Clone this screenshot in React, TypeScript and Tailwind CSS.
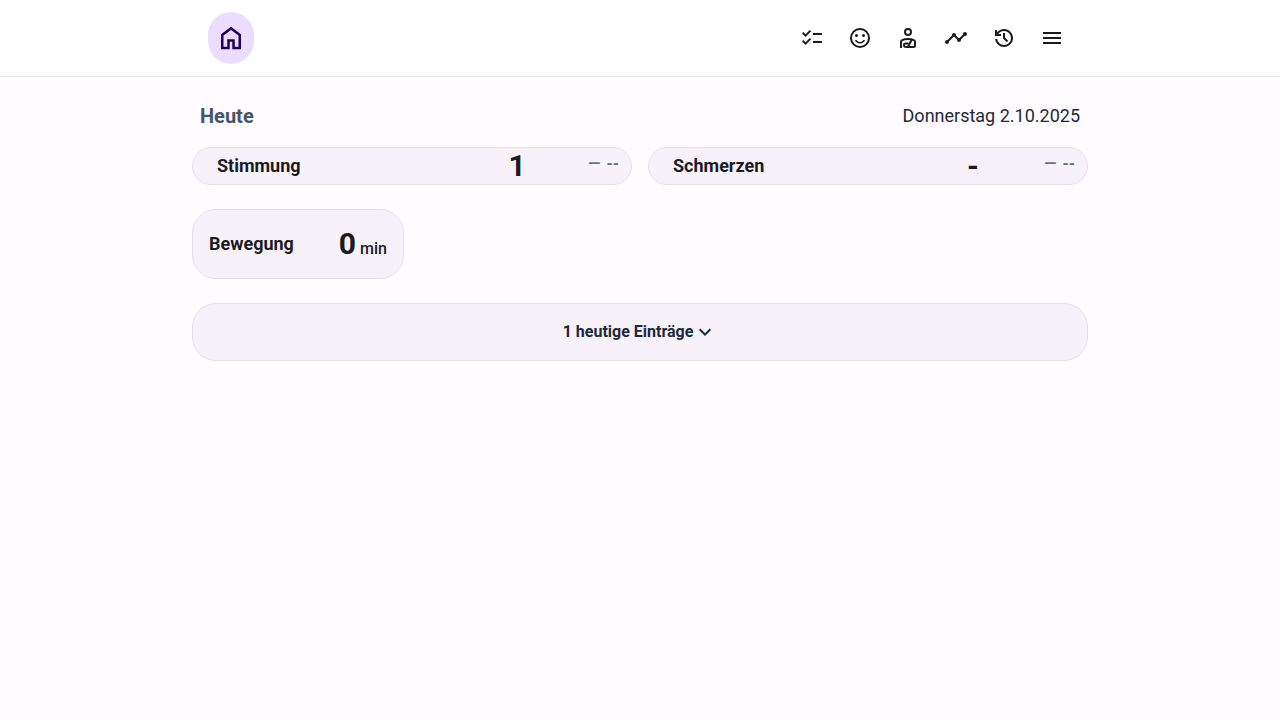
import type { ReactNode } from "react";
import { MdChecklist, MdExpandMore, MdMenu, MdTimeline } from "react-icons/md";

function HomeIcon() {
  return (
    <svg viewBox="0 0 24 24" className="size-[30px]" fill="currentColor" aria-hidden="true">
      <path d="M6 19h3v-6h6v6h3v-9l-6-4.5L6 10zm-2 2V9l8-6 8 6v12h-7v-6h-2v6z" />
    </svg>
  );
}

function MoodIcon() {
  return (
    <svg viewBox="0 0 24 24" className="size-6" fill="currentColor" aria-hidden="true">
      <circle cx="12" cy="12" r="9" fill="none" stroke="currentColor" strokeWidth="2" />
      <circle cx="8.5" cy="9.5" r="1.5" />
      <circle cx="15.5" cy="9.5" r="1.5" />
      <path d="M12 16c-1.48 0-2.75-.81-3.45-2H6.88c.8 2.05 2.79 3.5 5.12 3.5s4.32-1.45 5.12-3.5h-1.67c-.7 1.19-1.97 2-3.45 2z" />
    </svg>
  );
}

function PainIcon() {
  return (
    <svg viewBox="0 0 24 24" className="size-6" fill="none" stroke="currentColor" strokeWidth="2" aria-hidden="true">
      <circle cx="12" cy="6" r="3" />
      <path d="M5 22v-6.2c0-.8.4-1.4 1.1-1.7C7.6 13.4 9.7 13 12 13s4.4.4 5.9 1.1c.7.3 1.1.9 1.1 1.7V19.5a1.5 1.5 0 0 1-1.5 1.5H9.5" />
      <path d="M15.8 13.6L11.8 21M12.5 17.5H9.7a1.75 1.75 0 0 0 0 3.5" />
    </svg>
  );
}

function HistoryIcon() {
  return (
    <svg viewBox="0 0 24 24" className="size-6" fill="currentColor" aria-hidden="true">
      <path d="M12 21q-3.45 0-6.012-2.287T3.05 13H5.1q.35 2.6 2.313 4.3T12 19q2.925 0 4.963-2.037T19 12t-2.037-4.962T12 5q-1.725 0-3.225.8T6.25 8H9v2H3V4h2v2.35q1.275-1.6 3.113-2.475T12 3q1.875 0 3.513.713t2.85 1.924t1.925 2.85T21 12t-.712 3.513t-1.925 2.85t-2.85 1.925T12 21m2.8-4.8L11 12.4V7h2v4.6l3.2 3.2z" />
    </svg>
  );
}

function NavLink({ label, children }: { label: string; children: ReactNode }) {
  return (
    <a href="#" aria-label={label} className="flex size-12 items-center justify-center rounded-full">
      {children}
    </a>
  );
}

function ScoreCard({ title, value }: { title: string; value: string }) {
  return (
    <section className="grid grid-cols-[1fr_64px_70px] items-center rounded-3xl border border-[#e6e0e9] bg-[#f7f2fa] pr-3 pl-6">
      <h2 className="text-lg leading-9 font-bold">{title}</h2>
      <p className="text-center text-3xl leading-9 font-bold">{value}</p>
      <p className="flex items-center justify-end gap-1.5 pb-1 text-base leading-5 font-bold text-gray-500">
        <span>—</span>
        <span>--</span>
      </p>
    </section>
  );
}

export default function App() {
  return (
    <div className="min-h-screen bg-[#fffbff] font-['Roboto',sans-serif] text-[#1c1b1f]">
      <header className="border-b border-gray-200 bg-white">
        <nav className="mx-auto flex max-w-4xl items-center justify-between py-3 pr-3 pl-4">
          <a
            href="#"
            aria-label="Startseite"
            className="flex h-[52px] items-center rounded-full bg-[#eaddff] px-2 text-[#21005d]"
          >
            <HomeIcon />
          </a>
          <div className="flex items-center">
            <NavLink label="Aufgaben">
              <MdChecklist className="size-6" />
            </NavLink>
            <NavLink label="Stimmung">
              <MoodIcon />
            </NavLink>
            <NavLink label="Schmerzen">
              <PainIcon />
            </NavLink>
            <NavLink label="Verlauf">
              <MdTimeline className="size-6" />
            </NavLink>
            <NavLink label="Historie">
              <HistoryIcon />
            </NavLink>
            <button type="button" aria-label="Menü" className="flex size-12 items-center justify-center rounded-full">
              <MdMenu className="size-6" />
            </button>
          </div>
        </nav>
      </header>

      <main className="mx-auto flex max-w-4xl flex-col gap-6 pt-6">
        <div>
          <div className="mb-4 flex items-center justify-between px-2">
            <h1 className="text-xl leading-[30px] font-bold text-slate-600">Heute</h1>
            <p className="text-lg text-gray-800">Donnerstag 2.10.2025</p>
          </div>
          <div className="grid grid-cols-2 gap-4">
            <ScoreCard title="Stimmung" value="1" />
            <ScoreCard title="Schmerzen" value="-" />
          </div>
        </div>

        <div className="grid grid-cols-4 gap-4">
          <section className="flex items-center justify-between rounded-3xl border border-[#e6e0e9] bg-[#f7f2fa] p-4">
            <h2 className="text-lg font-bold">Bewegung</h2>
            <p className="text-3xl leading-9 font-bold">
              0<span className="ml-1 text-base font-medium">min</span>
            </p>
          </section>
        </div>

        <button
          type="button"
          className="flex items-center justify-center rounded-3xl border border-[#e6e0e9] bg-[#f7f2fa] p-4 font-bold text-gray-800"
        >
          1 heutige Einträge
          <MdExpandMore className="size-6" aria-hidden="true" />
        </button>
      </main>
    </div>
  );
}
